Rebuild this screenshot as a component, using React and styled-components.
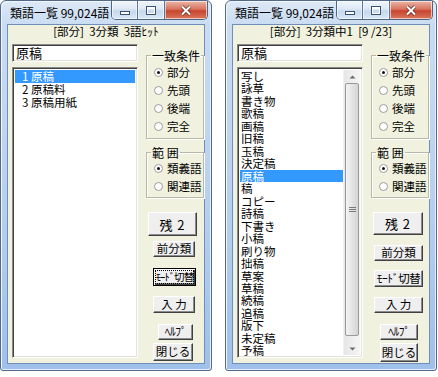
import styled, { createGlobalStyle } from 'styled-components'

const GlobalStyle = createGlobalStyle`
  html, body { margin: 0; padding: 0; background: #fff; }
  body { font-family: "Noto Sans CJK JP", "Noto Sans", sans-serif; font-size: 11.5px; color: #000; }
`

const Desktop = styled.div`
  display: flex;
  gap: 13px;
  width: 438px;
  height: 377px;
  overflow: hidden;
`

const Window = styled.div`
  width: 212px;
  height: 371px;
  box-sizing: border-box;
  border: 1px solid #52698a;
  border-radius: 6px 6px 3px 3px;
  background: linear-gradient(180deg, #dce8f7 0, #cadcf2 24px, #b7d0ef 55%, #9fc0ea 100%);
  display: flex;
  flex-direction: column;
  box-shadow: inset 1px 1px 0 #f2f7fd, inset -1px -1px 0 #e6eef9;
`

const TitleBar = styled.div`
  height: 23px;
  display: flex;
  align-items: flex-start;
  justify-content: space-between;
  padding: 0 3px 0 9px;
`

const Title = styled.div`
  font-size: 12px;
  line-height: 23px;
  color: #000;
  white-space: nowrap;
`

const CaptionButtons = styled.div`
  display: flex;
  flex-shrink: 0;
  height: 18px;
  border: 1px solid #4f6581;
  border-top: none;
  border-radius: 0 0 5px 5px;
  overflow: hidden;
`

const CapButton = styled.div`
  width: ${p => p.$w}px;
  display: flex;
  align-items: center;
  justify-content: center;
  background: ${p => p.$close
    ? 'linear-gradient(180deg, #ebb6a9 0, #d9745f 45%, #c8442d 55%, #d8775c 100%)'
    : 'linear-gradient(180deg, #f0f5fb 0, #dde8f5 45%, #c6d8ef 55%, #d9e8f8 100%)'};
  box-shadow: inset 0 0 0 1px rgba(255, 255, 255, 0.6);
  & + & { border-left: 1px solid #5d7393; }
`

const FrameBody = styled.div`
  flex: 1;
  padding: 0 6px 6px 6px;
  display: flex;
`

const Client = styled.div`
  flex: 1;
  border: 1px solid #6f8fba;
  background: #f0f2df;
  display: grid;
  grid-template-columns: 126px 58px;
  grid-template-rows: 13px 1fr;
  column-gap: 8px;
  padding-left: 4px;
`

const Header = styled.div`
  grid-column: 1 / span 2;
  text-align: center;
  line-height: 13px;
  white-space: pre;
  margin-left: -4px;
`

const LeftCol = styled.div`
  display: flex;
  flex-direction: column;
  padding-top: 6px;
`

const Sunken = styled.div`
  box-sizing: border-box;
  background: #fff;
  border: 1px solid;
  border-color: #8a8a8a #ffffff #ffffff #8a8a8a;
  box-shadow: inset 1px 1px 0 #404040, inset -1px -1px 0 #e2e2d6;
`

const TextInput = styled(Sunken)`
  height: 18px;
  padding: 0 3px;
  font-size: 13px;
  line-height: 16px;
`

const ListBox = styled(Sunken)`
  margin-top: 5px;
  height: 291px;
  padding: 2px;
  display: flex;
`

const Rows = styled.div`
  flex: 1;
  min-width: 0;
`

const Row = styled.div`
  height: ${p => p.$h}px;
  line-height: ${p => p.$h}px;
  padding-left: ${p => p.$pad}px;
  font-size: 11.5px;
  white-space: pre;
  overflow: hidden;
  background: ${p => (p.$sel ? '#3399ff' : 'transparent')};
  color: ${p => (p.$sel ? '#fff' : '#000')};
`

const ScrollBar = styled.div`
  width: 16px;
  display: flex;
  flex-direction: column;
  background: linear-gradient(90deg, #e6e6e6, #f5f5f5);
  border-left: 1px solid #f0f0f0;
`

const ScrollArrow = styled.div`
  height: 13px;
  display: flex;
  align-items: center;
  justify-content: center;
`

const Thumb = styled.div`
  flex: 1;
  margin: 0 1px 6px 1px;
  border: 1px solid #9a9a9a;
  border-radius: 2px;
  background: linear-gradient(90deg, #f4f4f4, #e4e4e4 50%, #d4d4d4);
  display: flex;
  align-items: center;
  justify-content: center;
`

const RightCol = styled.div`
  display: flex;
  flex-direction: column;
`

const Group = styled.fieldset`
  margin: ${p => p.$mt}px 0 0 0;
  padding: 0 0 ${p => p.$pb}px 4px;
  min-width: 0;
  border: 1px solid #b9b9aa;
  box-shadow: inset 1px 1px 0 #fff, 1px 1px 0 #fff;
`

const Legend = styled.legend`
  padding: 0 1px;
  line-height: 13px;
  font-size: 12px;
  white-space: pre;
`

const RadioRow = styled.div`
  height: 18px;
  margin-top: ${p => p.$mt || 0}px;
  display: flex;
  align-items: center;
  gap: 4px;
  padding-left: 3px;
  white-space: nowrap;
`

const RadioDot = styled.span`
  flex-shrink: 0;
  width: 9px;
  height: 9px;
  box-sizing: border-box;
  border-radius: 50%;
  border: 1px solid #9c9c9c;
  background: #fff;
  display: flex;
  align-items: center;
  justify-content: center;
  &::after {
    content: '';
    width: 3px;
    height: 3px;
    border-radius: 50%;
    background: ${p => (p.$on ? '#111' : 'transparent')};
  }
`

const Button = styled.div`
  box-sizing: border-box;
  width: ${p => p.$w}px;
  height: ${p => p.$h}px;
  margin-top: ${p => p.$mt}px;
  margin-left: ${p => p.$ml}px;
  background: #efefef;
  border: 1px solid;
  border-color: #ffffff #404040 #404040 #ffffff;
  box-shadow: inset -1px -1px 0 #8c8c8c;
  display: flex;
  align-items: center;
  justify-content: center;
  white-space: pre;
  overflow: hidden;
  font-size: ${p => p.$fs || 11.5}px;
  letter-spacing: ${p => p.$ls || 0}px;
  line-height: 1;
  ${p => p.$focus && `
    border-color: #000;
    box-shadow: inset 1px 1px 0 #fff, inset -1px -1px 0 #404040, inset -2px -2px 0 #8c8c8c;
    outline: 1px dotted #000;
    outline-offset: -3px;
  `}
`

const MinIcon = () => (
  <svg width="10" height="10" viewBox="0 0 10 10">
    <rect x="0.5" y="6.5" width="9" height="3" fill="#fff" stroke="#3d5270" />
  </svg>
)

const MaxIcon = () => (
  <svg width="10" height="9" viewBox="0 0 10 9">
    <rect x="0.5" y="0.5" width="9" height="8" fill="none" stroke="#3d5270" />
    <rect x="1.5" y="2.5" width="7" height="5" fill="none" stroke="#fff" />
    <rect x="1" y="1" width="8" height="1.5" fill="#fff" />
  </svg>
)

const CloseIcon = () => (
  <svg width="12" height="11" viewBox="0 0 12 11">
    <path d="M2 1.5 L10 9.5 M10 1.5 L2 9.5" stroke="#5a2a22" strokeWidth="3.4" />
    <path d="M2 1.5 L10 9.5 M10 1.5 L2 9.5" stroke="#fff" strokeWidth="2" />
  </svg>
)

const Arrow = ({ up }) => (
  <svg width="7" height="4" viewBox="0 0 7 4">
    <path d={up ? 'M0.5 3.5 L3.5 0.5 L6.5 3.5 Z' : 'M0.5 0.5 L3.5 3.5 L6.5 0.5 Z'} fill="#6a6a6a" />
  </svg>
)

const Grip = () => (
  <svg width="7" height="7" viewBox="0 0 7 7">
    <path d="M0 1.5 H7 M0 3.5 H7 M0 5.5 H7" stroke="#7a7a7a" strokeWidth="1" />
  </svg>
)

function RuigoWindow({ header, items, selected, rowH, pad, scroll, buttons }) {
  return (
    <Window>
      <TitleBar>
        <Title>類語一覧 99,024語</Title>
        <CaptionButtons>
          <CapButton $w={25}><MinIcon /></CapButton>
          <CapButton $w={26}><MaxIcon /></CapButton>
          <CapButton $w={42} $close><CloseIcon /></CapButton>
        </CaptionButtons>
      </TitleBar>
      <FrameBody>
        <Client>
          <Header>{header}</Header>
          <LeftCol>
            <TextInput>原稿</TextInput>
            <ListBox>
              <Rows>
                {items.map((it, i) => (
                  <Row key={i} $h={rowH} $pad={pad} $sel={i === selected}>{it}</Row>
                ))}
              </Rows>
              {scroll && (
                <ScrollBar>
                  <ScrollArrow><Arrow up /></ScrollArrow>
                  <Thumb><Grip /></Thumb>
                  <ScrollArrow><Arrow /></ScrollArrow>
                </ScrollBar>
              )}
            </ListBox>
          </LeftCol>
          <RightCol>
            <Group $mt={11} $pb={3}>
              <Legend>一致条件</Legend>
              <RadioRow $mt={1}><RadioDot $on />部分</RadioRow>
              <RadioRow><RadioDot />先頭</RadioRow>
              <RadioRow><RadioDot />後端</RadioRow>
              <RadioRow><RadioDot />完全</RadioRow>
            </Group>
            <Group $mt={7} $pb={2}>
              <Legend>範 囲</Legend>
              <RadioRow><RadioDot $on />類義語</RadioRow>
              <RadioRow><RadioDot />関連語</RadioRow>
            </Group>
            {buttons.map(b => (
              <Button key={b.label} $w={b.w} $h={b.h} $mt={b.mt} $ml={b.ml} $fs={b.fs} $focus={b.focus} $ls={b.ls}>
                {b.label}
              </Button>
            ))}
          </RightCol>
        </Client>
      </FrameBody>
    </Window>
  )
}

const leftButtons = [
  { label: '残 2', w: 49, h: 24, mt: 14, ml: 2, fs: 13, ls: 1 },
  { label: '前分類', w: 42, h: 16, mt: 5, ml: 7 },
  { label: 'ﾓｰﾄﾞ切替', w: 43, h: 18, mt: 11, ml: 7, focus: true, fs: 10.5, ls: -0.9 },
  { label: '入 力', w: 42, h: 17, mt: 10, ml: 7 },
  { label: 'ﾍﾙﾌﾟ', w: 35, h: 16, mt: 11, ml: 12, ls: -0.5 },
  { label: '閉じる', w: 40, h: 18, mt: 3, ml: 7 },
]

const rightButtons = [
  { label: '残 2', w: 50, h: 23, mt: 14, ml: 2, fs: 13, ls: 1 },
  { label: '前分類', w: 49, h: 16, mt: 10, ml: 3 },
  { label: 'ﾓｰﾄﾞ切替', w: 49, h: 17, mt: 9, ml: 3, ls: -0.5 },
  { label: '入 力', w: 49, h: 16, mt: 10, ml: 3 },
  { label: 'ﾍﾙﾌﾟ', w: 38, h: 16, mt: 11, ml: 9, ls: -0.5 },
  { label: '閉じる', w: 38, h: 19, mt: 3, ml: 9 },
]

const synonyms = [
  '写し', '詠草', '書き物', '歌稿', '画稿', '旧稿', '玉稿', '決定稿', '原稿', '稿',
  'コピー', '詩稿', '下書き', '小稿', '刷り物', '拙稿', '草案', '草稿', '続稿', '追稿',
  '版下', '未定稿', '予稿',
]

export default function App() {
  return (
    <>
      <GlobalStyle />
      <Desktop>
        <RuigoWindow
          header="[部分]  3分類  3語ﾋｯﾄ"
          items={['1 原稿', '2 原稿料', '3 原稿用紙']}
          selected={0}
          rowH={13}
          pad={7}
          buttons={leftButtons}
        />
        <RuigoWindow
          header="[部分]  3分類中1  [9 /23]"
          items={synonyms}
          selected={8}
          rowH={12.48}
          pad={1}
          scroll
          buttons={rightButtons}
        />
      </Desktop>
    </>
  )
}
